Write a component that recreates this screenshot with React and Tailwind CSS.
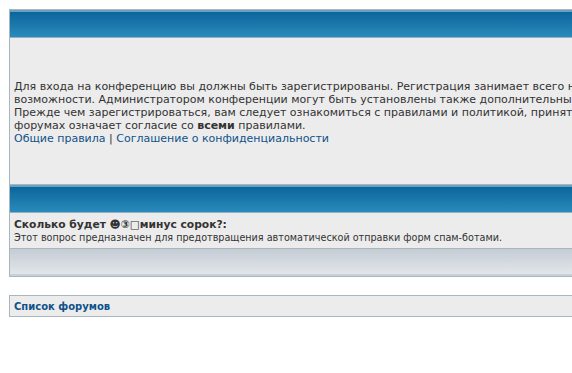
import React from "react";

const font = { fontFamily: '"DejaVu Sans", Verdana, sans-serif' };

const Header = () => (
  <div className="h-[28px] border-t-[2px] border-[#6a9fc2] bg-gradient-to-b from-[#09669c] to-[#2a8abb] border-b border-b-[#8fb0c6]" />
);

const App = () => {
  return (
    <div className="min-h-screen bg-white overflow-hidden pt-[9px] pl-[9px]" style={font}>
      <div className="w-[1000px] border border-[#a9b5bf] bg-[#ececec]">
        <Header />
        <div className="h-[146px] flex flex-col justify-center px-[4px] pt-[2px] text-[11px] leading-[13px] text-[#333333]">
          <div className="whitespace-nowrap">
            Для входа на конференцию вы должны быть зарегистрированы. Регистрация занимает всего несколько секунд, но даёт вам более широкие
          </div>
          <div className="whitespace-nowrap">
            возможности. Администратором конференции могут быть установлены также дополнительные привилегии для зарегистрированных пользователей.
          </div>
          <div className="whitespace-nowrap">
            Прежде чем зарегистрироваться, вам следует ознакомиться с правилами и политикой, принятыми на конференции. Регистрация на
          </div>
          <div className="whitespace-nowrap">
            форумах означает согласие со <b>всеми</b> правилами.
          </div>
          <div className="whitespace-nowrap">
            <a className="text-[#105289]">Общие правила</a> | <a className="text-[#105289]">Соглашение о конфиденциальности</a>
          </div>
        </div>
        <div className="border-t border-[#a9b5bf]">
          <Header />
        </div>
        <div className="h-[35px] px-[4px] pt-[5px] text-[#333333]">
          <div className="text-[10.7px] leading-[13px] font-bold">Сколько будет ☻③□минус сорок?:</div>
          <div className="text-[9.65px] leading-[13px]">
            Этот вопрос предназначен для предотвращения автоматической отправки форм спам-ботами.
          </div>
        </div>
        <div className="h-[28px] border-t border-[#a9b5bf] bg-gradient-to-b from-[#c4ccd4] to-[#e2e6ea] border-b-[2px] border-b-[#c8d0d8]" />
      </div>

      <div className="mt-[18px] w-[1000px] h-[22px] border border-[#a9b5bf] bg-[#ececec] flex items-center px-[4px]">
        <a className="text-[10px] font-bold text-[#105289]">Список форумов</a>
      </div>
    </div>
  );
};

export default App;
